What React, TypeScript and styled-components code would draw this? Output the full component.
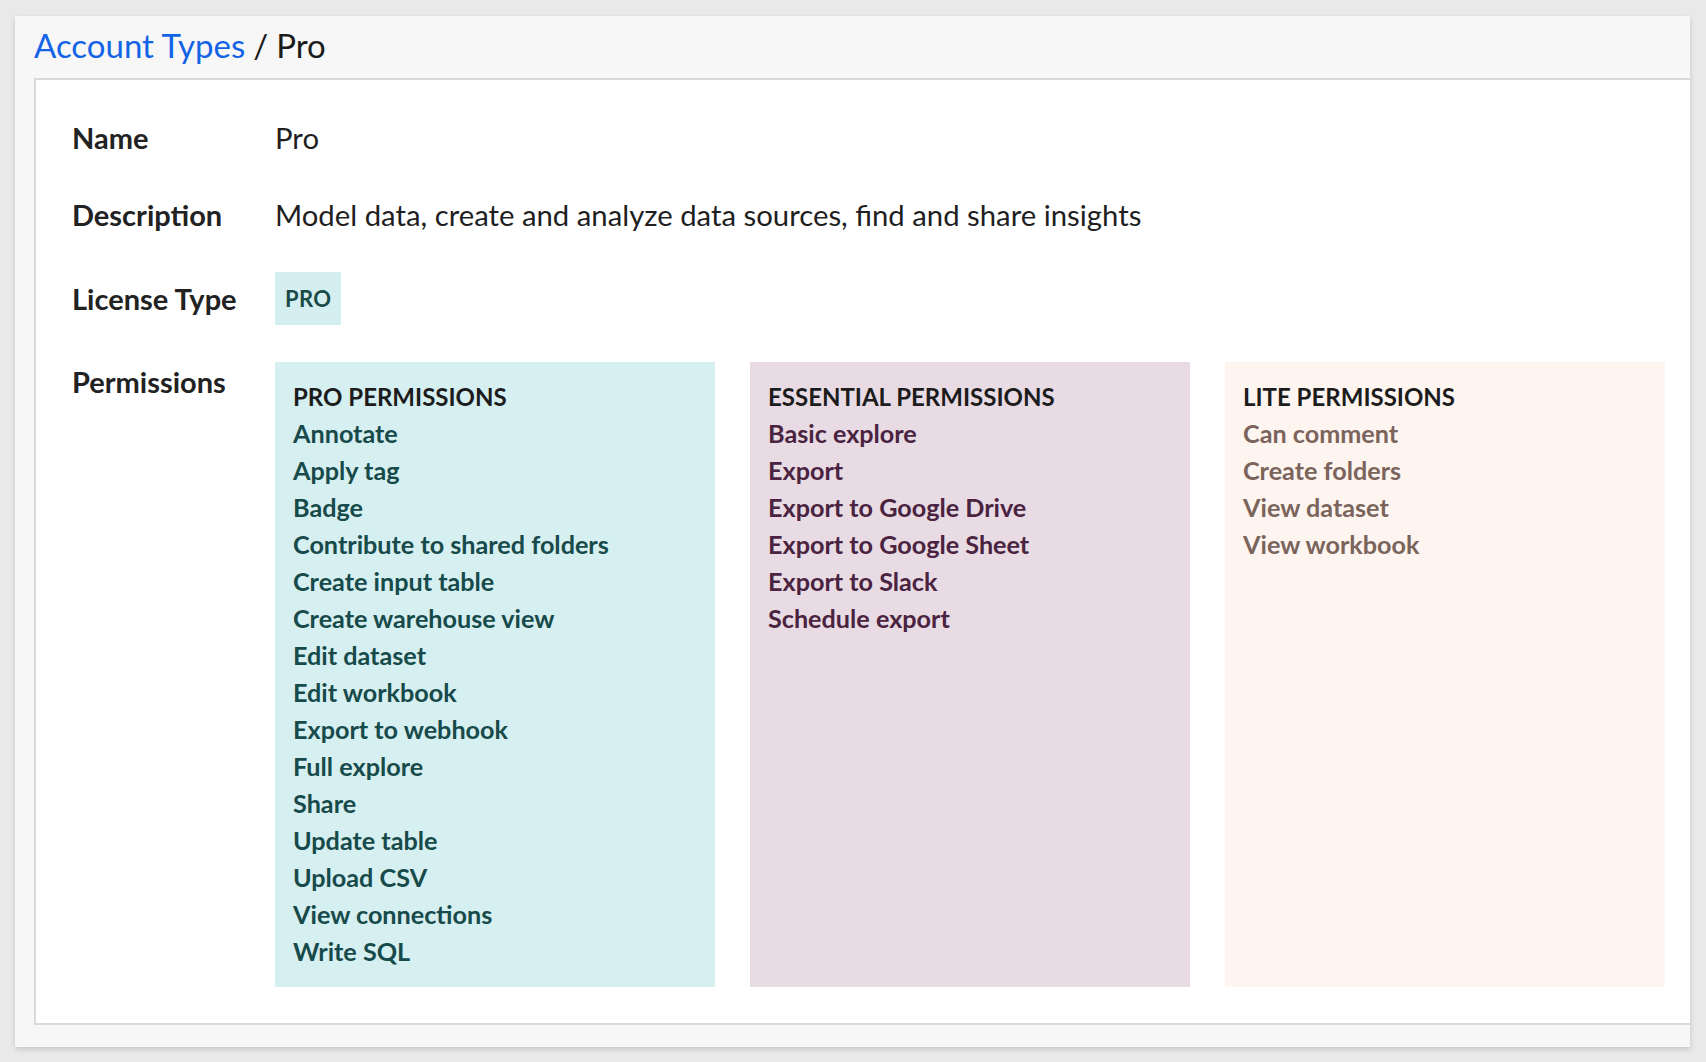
import React from "react";
import styled, { createGlobalStyle } from "styled-components";

const GlobalStyle = createGlobalStyle`
  html, body {
    margin: 0;
    padding: 0;
    background: #e9e9e9;
  }
  body {
    font-family: Lato, "Open Sans", sans-serif;
    color: #1e1e1e;
  }
`;

const Page = styled.div`
  padding: 16px 16px 15px 15px;
`;

const Card = styled.div`
  background: #f7f7f7;
  box-shadow: 0 2px 5px rgba(0, 0, 0, 0.16);
  padding-bottom: 22px;
`;

const Header = styled.div`
  height: 62px;
  box-sizing: border-box;
  display: flex;
  align-items: center;
  padding: 0 0 4px 19px;
  font-size: 33px;
  color: #1b1b1b;
`;

const Crumb = styled.a`
  color: #1363e6;
  text-decoration: none;
  cursor: pointer;
`;

const Separator = styled.span`
  margin: 0 8px;
`;

const Panel = styled.div`
  margin-left: 19px;
  background: #fff;
  border: 2px solid #d9d9d9;
  border-right: none;
  padding: 38px 25px 36px 36px;
  display: grid;
  grid-template-columns: 203px 1fr;
  row-gap: 37px;
  align-items: center;
`;

const Label = styled.div<{ $top?: boolean }>`
  font-size: 29px;
  font-weight: 700;
  line-height: 40px;
  color: #222;
  align-self: ${p => (p.$top ? "start" : "center")};
`;

const Value = styled.div`
  font-size: 29.3px;
  line-height: 40px;
  color: #1f1f1f;
`;

const Badge = styled.span`
  display: inline-flex;
  align-items: center;
  height: 53px;
  padding: 0 10px;
  background: #d5eff0;
  color: #1a4b49;
  font-size: 22px;
  font-weight: 700;
  letter-spacing: 0.3px;
`;

const Columns = styled.div`
  display: grid;
  grid-template-columns: repeat(3, 1fr);
  column-gap: 35px;
  align-self: start;
`;

const tones = {
  pro: { bg: "#d6eff0", fg: "#174a4a" },
  essential: { bg: "#e8dbe4", fg: "#4a2340" },
  lite: { bg: "#fef5f0", fg: "#7a645b" },
};

type Tone = keyof typeof tones;

const Box = styled.div<{ $tone: Tone }>`
  background: ${p => tones[p.$tone].bg};
  color: ${p => tones[p.$tone].fg};
  padding: 16px 18px 17px;
  min-height: 625px;
  box-sizing: border-box;
`;

const BoxTitle = styled.div`
  font-size: 24px;
  font-weight: 700;
  line-height: 37px;
  color: #1c1c1c;
`;

const Item = styled.div`
  font-size: 25.2px;
  font-weight: 700;
  line-height: 37px;
`;

const groups: { tone: Tone; title: string; items: string[] }[] = [
  {
    tone: "pro",
    title: "PRO PERMISSIONS",
    items: [
      "Annotate",
      "Apply tag",
      "Badge",
      "Contribute to shared folders",
      "Create input table",
      "Create warehouse view",
      "Edit dataset",
      "Edit workbook",
      "Export to webhook",
      "Full explore",
      "Share",
      "Update table",
      "Upload CSV",
      "View connections",
      "Write SQL",
    ],
  },
  {
    tone: "essential",
    title: "ESSENTIAL PERMISSIONS",
    items: [
      "Basic explore",
      "Export",
      "Export to Google Drive",
      "Export to Google Sheet",
      "Export to Slack",
      "Schedule export",
    ],
  },
  {
    tone: "lite",
    title: "LITE PERMISSIONS",
    items: ["Can comment", "Create folders", "View dataset", "View workbook"],
  },
];

export default function App() {
  return (
    <Page>
      <GlobalStyle />
      <Card>
        <Header>
          <Crumb>Account Types</Crumb>
          <Separator>/</Separator>
          <span>Pro</span>
        </Header>
        <Panel>
          <Label>Name</Label>
          <Value>Pro</Value>

          <Label>Description</Label>
          <Value>Model data, create and analyze data sources, find and share insights</Value>

          <Label>License Type</Label>
          <div>
            <Badge>PRO</Badge>
          </div>

          <Label $top>Permissions</Label>
          <Columns>
            {groups.map(g => (
              <Box key={g.tone} $tone={g.tone}>
                <BoxTitle>{g.title}</BoxTitle>
                {g.items.map(item => (
                  <Item key={item}>{item}</Item>
                ))}
              </Box>
            ))}
          </Columns>
        </Panel>
      </Card>
    </Page>
  );
}
